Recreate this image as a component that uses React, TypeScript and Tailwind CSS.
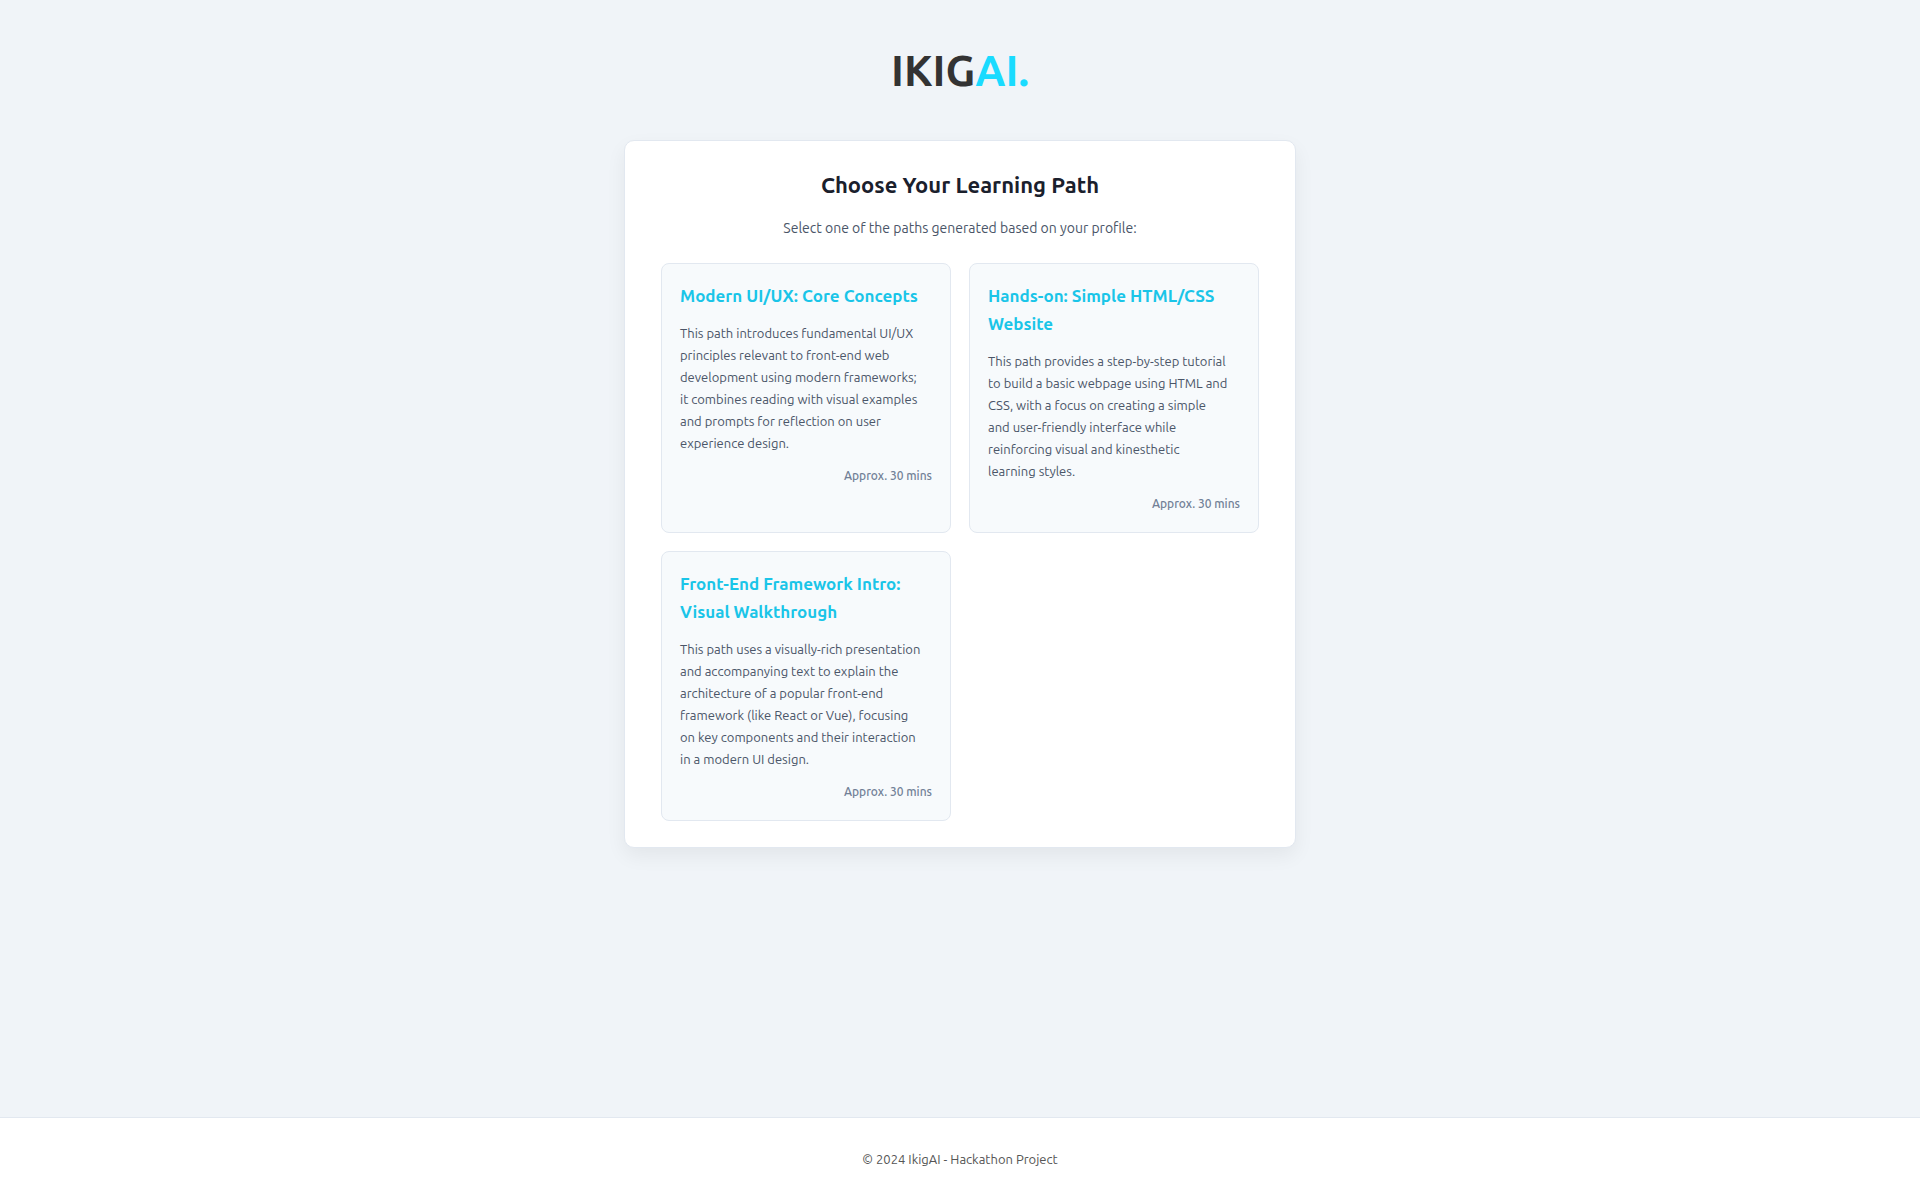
const paths = [
  {
    title: ['Modern UI/UX: Core Concepts'],
    description: [
      'This path introduces fundamental UI/UX',
      'principles relevant to front-end web',
      'development using modern frameworks;',
      'it combines reading with visual examples',
      'and prompts for reflection on user',
      'experience design.',
    ],
    duration: 'Approx. 30 mins',
  },
  {
    title: ['Hands-on: Simple HTML/CSS', 'Website'],
    description: [
      'This path provides a step-by-step tutorial',
      'to build a basic webpage using HTML and',
      'CSS, with a focus on creating a simple',
      'and user-friendly interface while',
      'reinforcing visual and kinesthetic',
      'learning styles.',
    ],
    duration: 'Approx. 30 mins',
  },
  {
    title: ['Front-End Framework Intro:', 'Visual Walkthrough'],
    description: [
      'This path uses a visually-rich presentation',
      'and accompanying text to explain the',
      'architecture of a popular front-end',
      'framework (like React or Vue), focusing',
      'on key components and their interaction',
      'in a modern UI design.',
    ],
    duration: 'Approx. 30 mins',
  },
];

type Path = (typeof paths)[number];

function PathCard({ path }: { path: Path }) {
  return (
    <button
      type="button"
      className="flex cursor-pointer flex-col rounded-lg border border-[#e2e8f0] bg-[#f7fafc] p-[18px] text-left"
    >
      <span className="text-[17px] leading-7 font-semibold whitespace-pre-line text-[#1ac5e8]">
        {path.title.join('\n')}
      </span>
      <span className="mt-3 text-[13px] leading-[22px] whitespace-pre-line text-[#4a5568]">
        {path.description.join('\n')}
      </span>
      <span className="mt-3 self-end text-[12px] leading-5 font-medium text-[#718096]">{path.duration}</span>
    </button>
  );
}

export default function App() {
  return (
    <div className="flex min-h-screen flex-col bg-[#f0f4f8] font-[Ubuntu,'Open_Sans',sans-serif]">
      <header className="py-10 text-center">
        <h1 className="text-[43px] leading-[60px] font-semibold text-[#333]">
          IKIG<span className="text-[#1adbff]">AI.</span>
        </h1>
      </header>
      <main className="mx-auto w-full max-w-[672px] flex-1">
        <section className="rounded-[10px] border border-[#e2e8f0] bg-white px-9 pt-7 pb-[26px] shadow-[0_8px_20px_rgba(0,0,0,0.06)]">
          <h2 className="text-center text-[22px] leading-8 font-semibold text-[#1a202c]">Choose Your Learning Path</h2>
          <p className="mt-4 mb-6 text-center text-[14px] leading-[22px] text-[#4a5568]">
            Select one of the paths generated based on your profile:
          </p>
          <div className="grid grid-cols-2 gap-[18px]">
            {paths.map((path) => (
              <PathCard key={path.title[0]} path={path} />
            ))}
          </div>
        </section>
      </main>
      <footer className="border-t border-[#e2e8f0] bg-white py-8 text-center text-[13px] leading-[18px] text-[#555]">
        © 2024 IkigAI - Hackathon Project
      </footer>
    </div>
  );
}
